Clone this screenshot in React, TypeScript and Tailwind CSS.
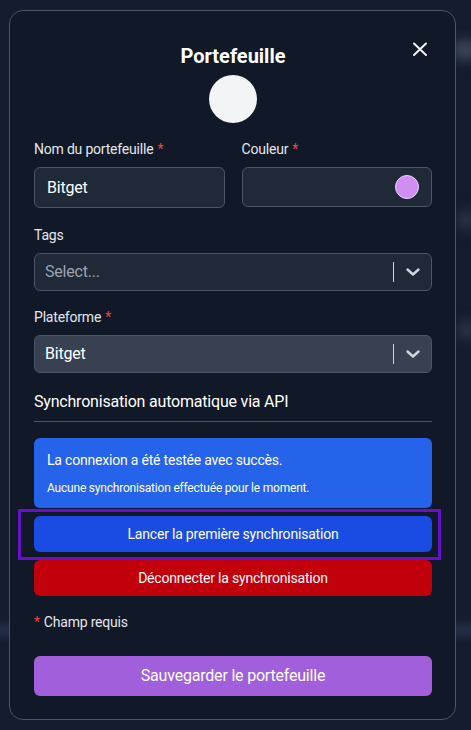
import React from "react";

const Star = () => <span className="text-[#ef4444] ml-1">*</span>;

const Chevron = () => (
  <div className="flex items-center h-full">
    <div className="w-px h-5 bg-[#d1d5db]" />
    <div className="w-[37px] flex items-center justify-center">
      <svg width="14" height="8" viewBox="0 0 14 8" fill="none">
        <path d="M1.5 1.5 7 6.5l5.5-5" stroke="#d1d5db" strokeWidth="2.4" strokeLinecap="round" strokeLinejoin="round" />
      </svg>
    </div>
  </div>
);

export default function App() {
  return (
    <div
      className="relative w-[471px] h-[730px] overflow-hidden bg-[#151c2f] pt-[10px] pl-[9px] tracking-[-0.2px]"
      style={{ fontFamily: "Roboto, 'Liberation Sans', sans-serif" }}
    >
      <div className="absolute right-[-10px] top-[40px] w-[30px] h-[20px] rounded-full bg-[#3a4458] blur-[6px]" />
      <div className="absolute right-[-6px] top-[210px] w-[20px] h-[20px] rounded-full bg-[#2a3346] blur-[6px]" />
      <div className="absolute right-[-6px] top-[320px] w-[20px] h-[20px] rounded-full bg-[#2a3346] blur-[6px]" />
      <div className="absolute left-[-20px] top-[625px] w-[50px] h-[10px] rounded-full bg-[#2a3450] blur-[5px]" />
      <div className="absolute right-[-20px] top-[625px] w-[50px] h-[10px] rounded-full bg-[#2a3450] blur-[5px]" />

      <div className="relative w-[447px] h-[710px] rounded-[14px] border border-[#4b5563] bg-[#111827] pl-6 pr-[23px] pt-[31px] text-[#e5e7eb]">
        <button className="absolute right-[27px] top-[30px] w-4 h-4 flex items-center justify-center">
          <svg width="16" height="16" viewBox="0 0 16 16" fill="none">
            <path d="M2 2.5l12 11.5M14 2.5 2 14" stroke="#f3f4f6" strokeWidth="2" strokeLinecap="round" />
          </svg>
        </button>

        <h2 className="text-center text-[20px] leading-[28px] font-bold text-white tracking-normal">Portefeuille</h2>
        <div className="flex justify-center mt-[5px]">
          <div className="w-12 h-12 rounded-full bg-[#f3f4f6]" />
        </div>

        <div className="grid grid-cols-2 gap-[17px] mt-4">
          <div>
            <label className="block text-[14px] leading-5 mb-2">
              Nom du portefeuille<Star />
            </label>
            <div className="h-[41px] rounded-md border border-[#4b5563] bg-[#1f2937] flex items-center px-[12px] text-[16px] text-white">
              Bitget
            </div>
          </div>
          <div>
            <label className="block text-[14px] leading-5 mb-2">
              Couleur<Star />
            </label>
            <div className="h-10 rounded-md border border-[#4b5563] bg-[#1f2937] flex items-center justify-end pr-[12px]">
              <div className="w-6 h-6 rounded-full bg-[#cf8ef0] border border-[#e9d5ff]" />
            </div>
          </div>
        </div>

        <label className="block text-[14px] leading-5 mt-[17px] mb-2">Tags</label>
        <div className="h-[38px] rounded-md border border-[#4b5563] bg-[#1f2937] flex items-center pl-[10px]">
          <span className="flex-1 text-[16px] text-[#9ca3af]">Select...</span>
          <Chevron />
        </div>

        <label className="block text-[14px] leading-5 mt-4 mb-2">
          Plateforme<Star />
        </label>
        <div className="h-[38px] rounded-md border border-[#4b5563] bg-[#374151] flex items-center pl-[10px]">
          <span className="flex-1 text-[16px] text-white">Bitget</span>
          <Chevron />
        </div>

        <div className="mt-[17px] pb-[7px] border-b border-[#4b5563] text-[16px] leading-6 text-white">
          Synchronisation automatique via API
        </div>

        <div className="mt-4 rounded-md bg-[#2563eb] px-[13px] pt-3 pb-3 text-white">
          <p className="text-[14px] leading-5">La connexion a été testée avec succès.</p>
          <p className="text-[12px] leading-4 mt-[10px]">Aucune synchronisation effectuée pour le moment.</p>
        </div>

        <div className="relative mt-2">
          <div className="absolute left-[-16px] right-[-9px] top-[-7px] bottom-[-8px] border-[3px] border-[#6610cc] pointer-events-none" />
          <button className="w-full h-9 rounded-md bg-[#1a4ce3] text-white text-[14px]">
            Lancer la première synchronisation
          </button>
        </div>
        <button className="w-full h-9 mt-[8px] rounded-md bg-[#c1000b] text-white text-[14px]">
          Déconnecter la synchronisation
        </button>

        <p className="mt-4 text-[14px] leading-5">
          <span className="text-[#ef4444] mr-1">*</span>Champ requis
        </p>

        <button className="w-full h-10 mt-6 rounded-md bg-[#a15fdb] text-white text-[16px]">
          Sauvegarder le portefeuille
        </button>
      </div>
    </div>
  );
}
